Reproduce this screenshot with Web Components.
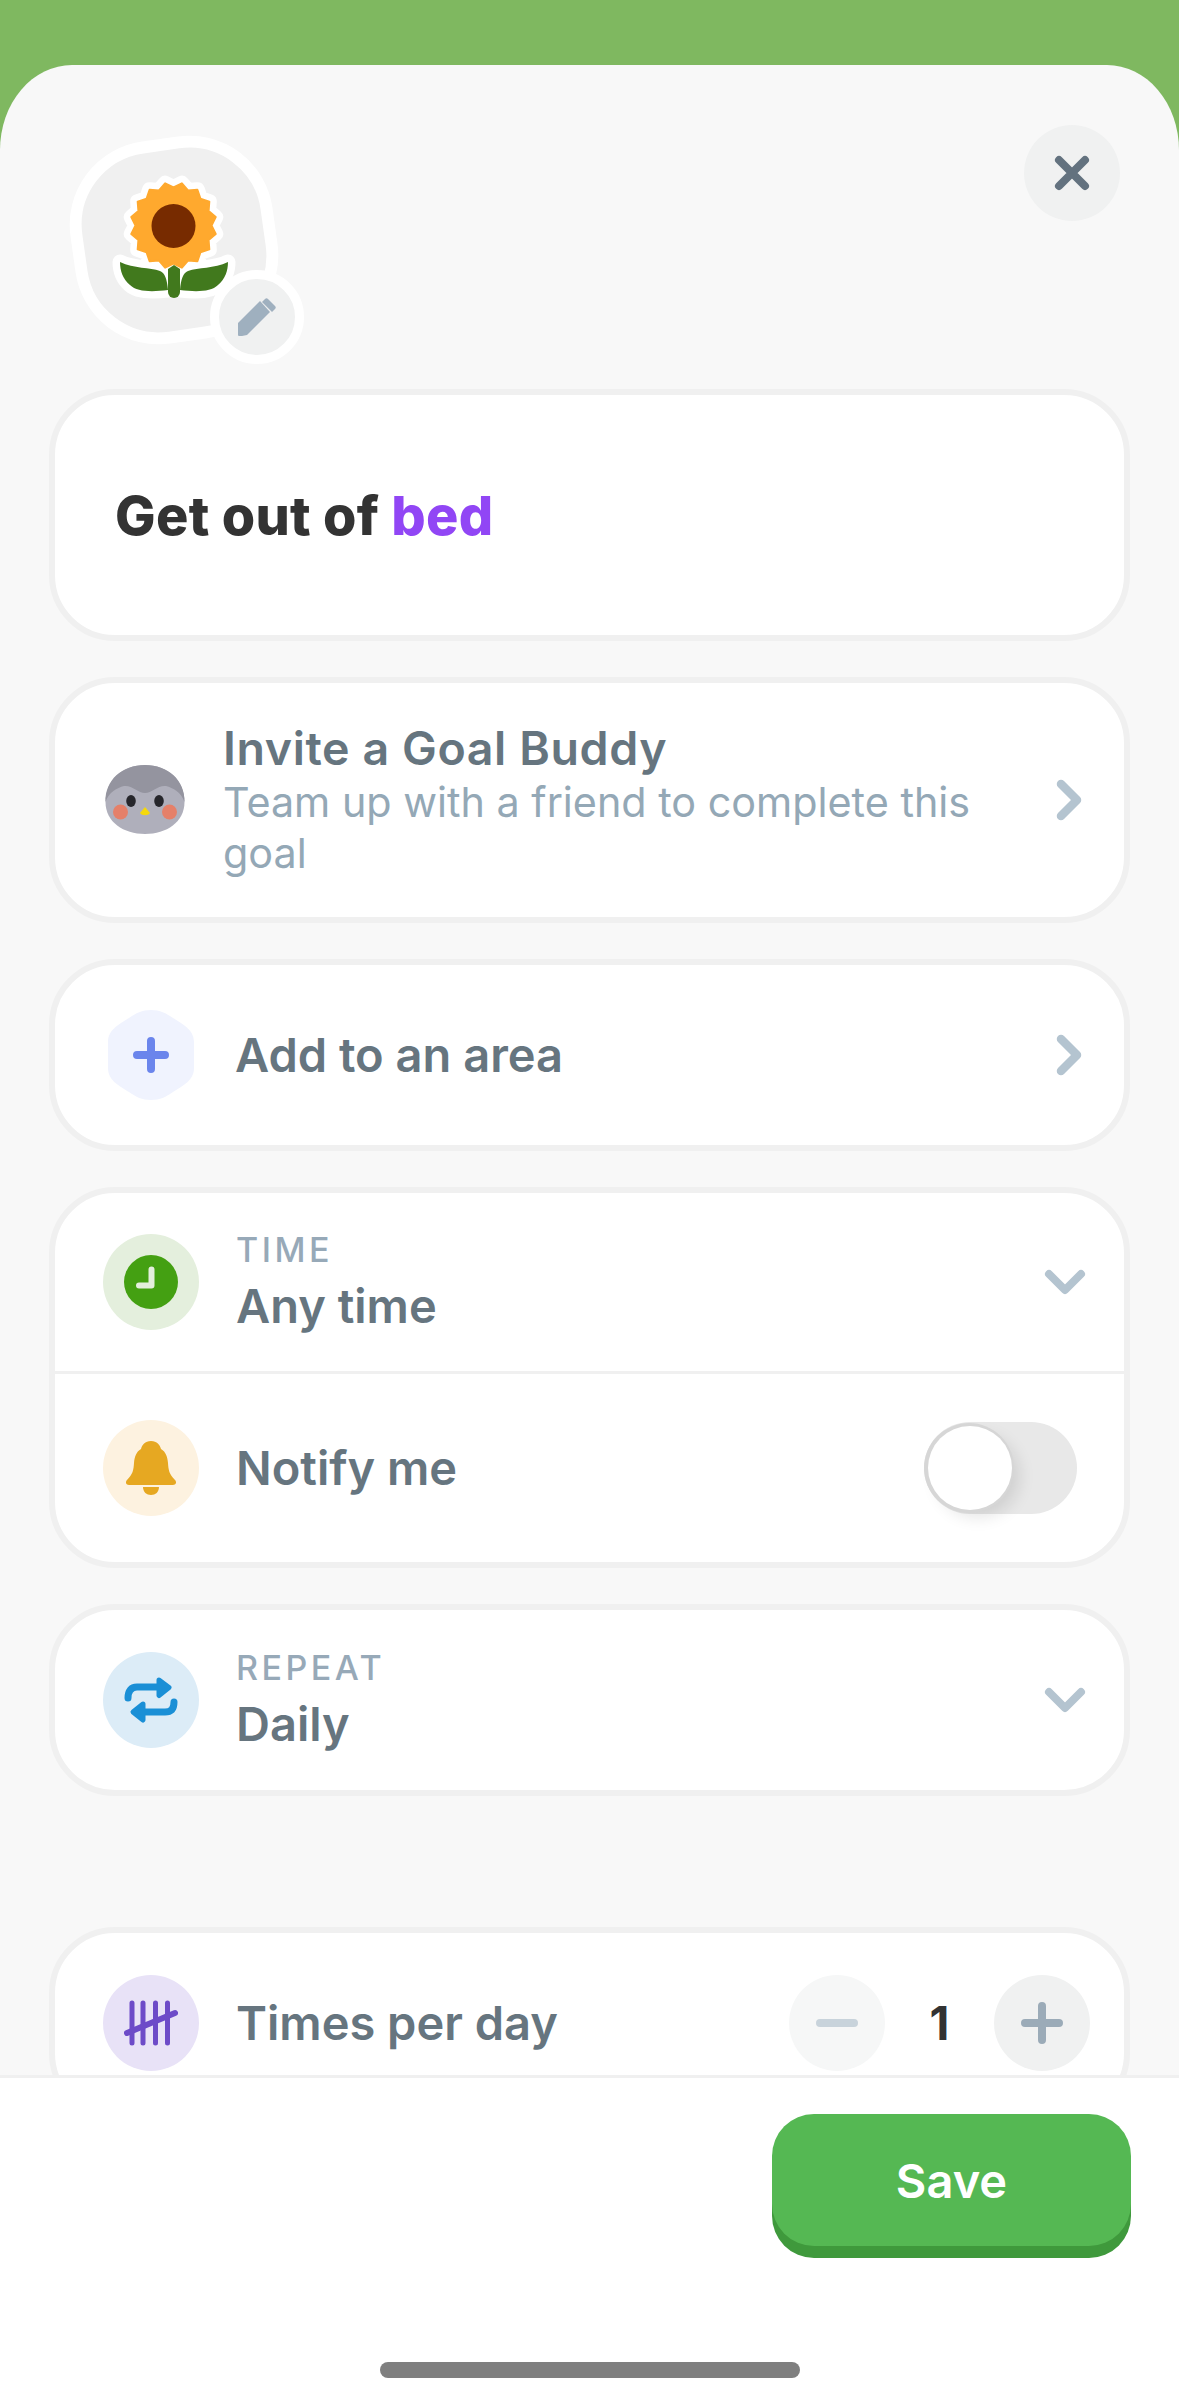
<!DOCTYPE html>
<html>
<head>
<meta charset="utf-8">
<style>
html, body { margin: 0; height: 100%; }
body { background: #7fb860; font-family: Inter, "Liberation Sans", sans-serif; }
</style>
</head>
<body>
<goal-sheet>
  <goal-avatar slot="head"></goal-avatar>
  <close-button slot="head"></close-button>
  <title-card><span>Get out of </span><b>bed</b></title-card>
  <goal-card>
    <goal-row kind="buddy" chevron="right" heading="Invite a Goal Buddy" sub="Team up with a friend to complete this goal"></goal-row>
  </goal-card>
  <goal-card>
    <goal-row kind="plus" chevron="right" text="Add to an area"></goal-row>
  </goal-card>
  <goal-card>
    <goal-row kind="clock" chevron="down" label="TIME" text="Any time"></goal-row>
    <goal-row kind="bell" text="Notify me" divided><toggle-switch></toggle-switch></goal-row>
  </goal-card>
  <goal-card>
    <goal-row kind="repeat" chevron="down" label="REPEAT" text="Daily"></goal-row>
  </goal-card>
  <goal-card style="margin-top: 95px">
    <goal-row kind="tally" text="Times per day"><count-stepper value="1"></count-stepper></goal-row>
  </goal-card>
  <save-bar slot="footer"></save-bar>
</goal-sheet>

<script>
const ICONS = {
    buddy: `<svg width="80" height="72" viewBox="0 0 80 72">
        <path d="M40 1c22 0 39.500 15 39.500 37 0 20-18 32-39.500 32S.5 58 .5 38C.5 16 18 1 40 1z" fill="#afafbb"/>
        <path d="M.5 38C0 16 17 1 40 1s40 15 39.500 37C76 28 68 24 61 22c-8-1-14 7-21 7s-13-8-21-7C12 24 4 28 .5 38z" fill="#94949f"/>
        <ellipse cx="26" cy="37" rx="4.800" ry="6" fill="#26262b"/>
        <ellipse cx="54" cy="37" rx="4.800" ry="6" fill="#26262b"/>
        <circle cx="15.500" cy="48" r="7.500" fill="#e58069"/>
        <circle cx="64.500" cy="48" r="7.500" fill="#e58069"/>
        <path d="M40 43l5 6c-2 3-8 3-10 0z" fill="#f5d90a"/>
    </svg>`,
    plus: `<svg width="86" height="90" viewBox="0 0 86 90">
        <path d="M43 0C52 0 58 3 65 8 76 15 86 20 86 32V58C86 70 76 75 65 82 58 87 52 90 43 90S28 87 21 82C10 75 0 70 0 58V32C0 20 10 15 21 8 28 3 34 0 43 0z" fill="#f0f3fe"/>
        <path d="M43 31v28M29 45h28" stroke="#6b85ec" stroke-width="8" stroke-linecap="round" fill="none"/>
    </svg>`,
    clock: `<svg width="54" height="54" viewBox="0 0 54 54"><circle cx="27" cy="27" r="27" fill="#44a012"/><path d="M27.500 14.500v16H15" stroke="#e4efdd" stroke-width="6" stroke-linecap="round" stroke-linejoin="round" fill="none"/></svg>`,
    bell: `<svg width="52" height="56" viewBox="0 0 52 56">
        <path d="M26 1c6 0 9 4 10 8 5 3 6.500 8 7 14 .5 7 1 11 7 17 2 2 1 5-2 5H4c-3 0-4-3-2-5 6-6 6.500-10 7-17 .5-6 2-11 7-14 1-4 4-8 10-8z" fill="#e6a822"/>
        <path d="M18 47h16c0 5-3.500 8-8 8s-8-3-8-8z" fill="#e6a822"/>
    </svg>`,
    repeat: `<svg width="54" height="48" viewBox="0 0 54 48" fill="none" stroke="#1a8fd6" stroke-linecap="round" stroke-linejoin="round">
        <path d="M4 22c0-7 3-11 9-11h22M50 26c0 7-3 10-9 10H19" stroke-width="7"/>
        <path d="M35 4l10 7.500-10 8zM19 28L9 36l10 8z" fill="#1a8fd6" stroke-width="5"/>
    </svg>`,
    tally: `<svg width="54" height="46" viewBox="0 0 54 46" fill="none" stroke="#6d4bc8" stroke-linecap="round">
        <path d="M8 3v40M19 3v40M31.500 3v40M43.500 3v40" stroke-width="5"/>
        <path d="M3 33L51 13" stroke-width="6"/>
    </svg>`
};
const TINTS = { plus: "transparent", clock: "#e4efdd", bell: "#fdf2e0", repeat: "#dcecf7", tally: "#e8e2f7" };

class GoalSheet extends HTMLElement {
    constructor() {
        super();
        this.attachShadow({ mode: "open" });
        this.shadowRoot.innerHTML = `
            <style>
            :host { display: flex; flex-direction: column; height: 2396px; padding-top: 65px; box-sizing: border-box; }
            .sheet { flex: 1; min-height: 0; overflow: hidden; background: #f8f8f8; border-radius: 72px 72px 0 0 / 85px 85px 0 0; padding: 0 49px; }
            .head { display: flex; justify-content: space-between; align-items: flex-start; padding: 60px 0 0 21px; height: 324px; box-sizing: border-box; }
            .body { display: flex; flex-direction: column; gap: 36px; }
            footer { height: 321px; box-sizing: border-box; background: #fff; border-top: 3px solid #f0f0f0; }
            </style>
            <div class="sheet">
                <div class="head"><slot name="head"></slot></div>
                <div class="body"><slot></slot></div>
            </div>
            <footer><slot name="footer"></slot></footer>
        `;
    }
}
customElements.define("goal-sheet", GoalSheet);

class GoalAvatar extends HTMLElement {
    constructor() {
        super();
        // sixteen petal star round the flower centre
        let star = [];
        for (let i = 0; i < 32; i++) {
            const r = i % 2 ? 38 : 43;
            const a = (i * Math.PI) / 16 - Math.PI / 2 + Math.PI / 16;
            star.push((173.500 + r * Math.cos(a)).toFixed(1) + "," + (225.500 + r * Math.sin(a)).toFixed(1));
        }
        star = star.join(" ");
        const leaves = "M120 262c14 7 30 5 40 9 5 2 7 8 8 19-16 2-31 2-38-5-7-6-10-14-10-23zM228 262c-14 7-30 5-40 9-5 2-7 8-8 19 16 2 31 2 38-5 7-6 10-14 10-23z";
        this.attachShadow({ mode: "open" });
        this.shadowRoot.innerHTML = `
            <style>
            :host { display: block; position: relative; width: 210px; height: 210px; margin-top: 10px; }
            svg { display: block; overflow: visible; }
            .badge { position: absolute; left: 140px; top: 135px; width: 94px; height: 94px; box-sizing: border-box; border-radius: 50%; background: #f0f1f1; border: 9px solid #fff; }
            </style>
            <svg width="210" height="210" viewBox="70 135 210 210">
                <rect x="78" y="144" width="192" height="192" rx="78" transform="rotate(-8 174 240)" fill="#f0f0f0" stroke="#fff" stroke-width="12"/>
                <g fill="#fff" stroke="#fff" stroke-width="15" stroke-linejoin="round">
                    <polygon points="${star}"/>
                    <path d="${leaves}"/>
                    <path d="M174 270v25"/>
                </g>
                <polygon points="${star}" fill="#ffa92e" stroke="#ffa92e" stroke-width="2" stroke-linejoin="round"/>
                <circle cx="173.500" cy="226" r="22" fill="#772b00"/>
                <path d="${leaves}" fill="#41791d"/>
                <path d="M174 265l6 4v23a6 6 0 0 1-12 0v-23z" fill="#41791d"/>
            </svg>
            <div class="badge">
                <svg width="76" height="76" viewBox="219 279 76 76">
                    <path d="M238 323l22-22 10 11-23 23-5 1h-3c-1 0-1-1-1-1z" fill="#9fb0bf"/>
                    <path d="M265 299c1-1 2-1 3 0l7 7c1 1 1 2 0 3l-3 3-10-10z" fill="#9fb0bf"/>
                </svg>
            </div>
        `;
    }
}
customElements.define("goal-avatar", GoalAvatar);

class CloseButton extends HTMLElement {
    constructor() {
        super();
        this.attachShadow({ mode: "open" });
        this.shadowRoot.innerHTML = `
            <style>
            :host { display: flex; align-items: center; justify-content: center; width: 96px; height: 96px; margin-right: 10px; border-radius: 50%; background: #f0f1f1; }
            </style>
            <svg width="42" height="42" viewBox="0 0 42 42"><path d="M8 8l26 26M34 8L8 34" stroke="#63727f" stroke-width="8" stroke-linecap="round"/></svg>
        `;
    }
}
customElements.define("close-button", CloseButton);

class TitleCard extends HTMLElement {
    constructor() {
        super();
        this.attachShadow({ mode: "open" });
        this.shadowRoot.innerHTML = `
            <style>
            :host { display: flex; align-items: center; height: 252px; box-sizing: border-box; padding: 0 60px; background: #fff; border: 6px solid #f0f0f0; border-radius: 66px; font-size: 54px; font-weight: 800; letter-spacing: .3px; color: #333; }
            ::slotted(b) { color: #9146f5; font-weight: 800; white-space: pre; }
            ::slotted(span) { white-space: pre; }
            </style>
            <slot></slot>
        `;
    }
}
customElements.define("title-card", TitleCard);

class GoalCard extends HTMLElement {
    constructor() {
        super();
        this.attachShadow({ mode: "open" });
        this.shadowRoot.innerHTML = `
            <style>
            :host { display: block; flex: none; background: #fff; border: 6px solid #f0f0f0; border-radius: 66px; overflow: hidden; }
            </style>
            <slot></slot>
        `;
    }
}
customElements.define("goal-card", GoalCard);

class GoalRow extends HTMLElement {
    constructor() {
        super();
        const kind = this.getAttribute("kind");
        const chevron = this.getAttribute("chevron");
        const label = this.getAttribute("label");
        const text = this.getAttribute("text");
        const heading = this.getAttribute("heading");
        const sub = this.getAttribute("sub");
        let lines = "";
        if (heading) lines += `<div class="heading">${heading}</div><div class="sub">${sub}</div>`;
        if (label) lines += `<div class="label">${label}</div>`;
        if (text) lines += `<div class="text">${text}</div>`;
        let arrow = "";
        if (chevron === "right") arrow = `<svg class="chev" width="30" height="44" viewBox="0 0 30 44"><path d="M7 6l16 16L7 38" stroke="#b4c4d0" stroke-width="8.500" stroke-linecap="round" stroke-linejoin="round" fill="none"/></svg>`;
        if (chevron === "down") arrow = `<svg class="chev" width="44" height="30" viewBox="0 0 44 30"><path d="M6 7l16 16L38 7" stroke="#b4c4d0" stroke-width="8" stroke-linecap="round" stroke-linejoin="round" fill="none"/></svg>`;
        this.attachShadow({ mode: "open" });
        this.shadowRoot.innerHTML = `
            <style>
            :host { display: flex; align-items: center; box-sizing: border-box; padding: 0 47px 0 48px; height: 180px; color: #66757f; }
            :host([divided]) { border-top: 3px solid #f0f0f0; height: 191px; }
            :host([kind="buddy"]) { height: 234px; padding: 0 40px 0 50px; }
            :host([kind="plus"]) { padding: 0 40px 0 53px; }
            :host([kind="clock"]) { height: 178px; padding-right: 37px; }
            :host([kind="repeat"]) { padding-right: 37px; }
            :host([kind="tally"]) { padding-right: 34px; }
            .icon { flex: none; display: flex; align-items: center; justify-content: center; width: 96px; height: 96px; border-radius: 50%; background: ${TINTS[kind] || "transparent"}; }
            :host([kind="buddy"]) .icon { width: 80px; height: 72px; background: none; }
            :host([kind="plus"]) .icon { width: 86px; height: 90px; }
            .lines { flex: 1; min-width: 0; margin-left: 37px; }
            :host([kind="buddy"]) .lines { margin-left: 38px; }
            :host([kind="plus"]) .lines { margin-left: 41px; }
            .heading { font-size: 46.500px; font-weight: 600; line-height: 54px; letter-spacing: .6px; margin-bottom: 2px; }
            .sub { font-size: 41.300px; font-weight: 400; line-height: 51px; color: #94a8b6; padding-right: 30px; }
            .label { font-size: 34px; font-weight: 500; line-height: 38px; letter-spacing: 3.500px; color: #97a9b8; margin-bottom: 10px; }
            .text { font-size: 47px; font-weight: 600; line-height: 54px; }
            .chev { flex: none; }
            </style>
            <div class="icon">${ICONS[kind]}</div>
            <div class="lines">${lines}</div>
            <slot></slot>
            ${arrow}
        `;
    }
}
customElements.define("goal-row", GoalRow);

class ToggleSwitch extends HTMLElement {
    constructor() {
        super();
        this.attachShadow({ mode: "open" });
        this.shadowRoot.innerHTML = `
            <style>
            :host { display: block; position: relative; width: 153px; height: 92px; border-radius: 46px; background: #e8e8e8; }
            .knob { position: absolute; left: 4px; top: 4px; width: 84px; height: 84px; border-radius: 50%; background: #fff; box-shadow: -1px 0 0 3px #d6d6d6, 8px 8px 16px rgba(0,0,0,.1); }
            </style>
            <div class="knob"></div>
        `;
    }
}
customElements.define("toggle-switch", ToggleSwitch);

class CountStepper extends HTMLElement {
    constructor() {
        super();
        this.attachShadow({ mode: "open" });
        this.shadowRoot.innerHTML = `
            <style>
            :host { display: flex; align-items: center; }
            .btn { display: flex; align-items: center; justify-content: center; width: 96px; height: 96px; border-radius: 50%; background: #f0f1f1; }
            .btn.off { background: #f6f7f7; }
            .val { width: 109px; text-align: center; font-size: 46px; font-weight: 700; color: #333; }
            </style>
            <div class="btn off"><svg width="42" height="10" viewBox="0 0 42 10"><path d="M4 5h34" stroke="#c8d3db" stroke-width="8" stroke-linecap="round"/></svg></div>
            <div class="val">${this.getAttribute("value")}</div>
            <div class="btn"><svg width="42" height="42" viewBox="0 0 42 42"><path d="M21 4v34M4 21h34" stroke="#9babb8" stroke-width="8" stroke-linecap="round"/></svg></div>
        `;
    }
}
customElements.define("count-stepper", CountStepper);

class SaveBar extends HTMLElement {
    constructor() {
        super();
        this.attachShadow({ mode: "open" });
        this.shadowRoot.innerHTML = `
            <style>
            :host { display: flex; flex-direction: column; height: 100%; box-sizing: border-box; padding-top: 36px; }
            button { align-self: flex-end; width: 359px; height: 132px; margin-right: 48px; padding: 0; border: 0; border-radius: 42px; background: #55b853; box-shadow: 0 12px 0 #3f993c; color: #fff; font: 600 47px Inter, "Liberation Sans", sans-serif; }
            .home { align-self: center; width: 420px; height: 16px; margin-top: 116px; border-radius: 8px; background: #7f7f7f; }
            </style>
            <button>Save</button>
            <div class="home"></div>
        `;
    }
}
customElements.define("save-bar", SaveBar);
</script>
</body>
</html>
